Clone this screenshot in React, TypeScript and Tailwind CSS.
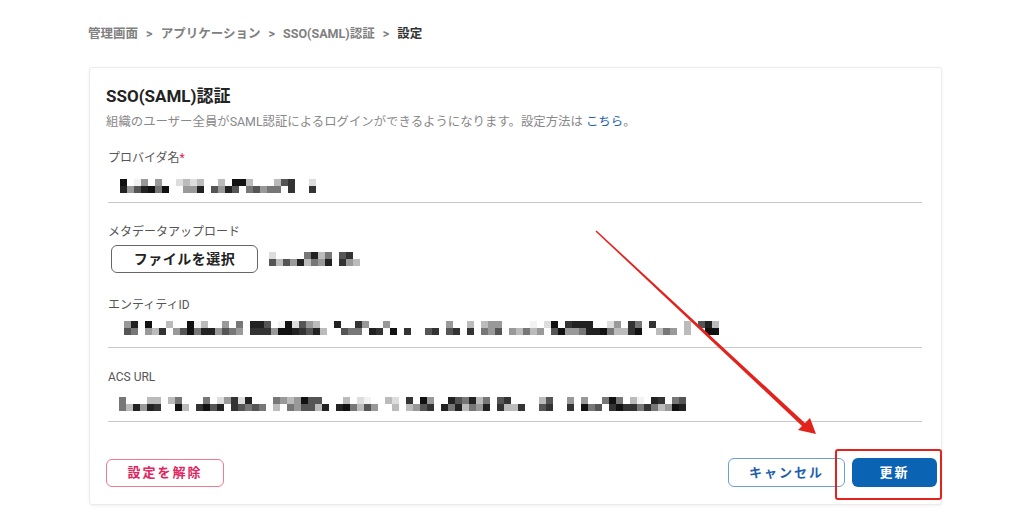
const FONT = "font-['Roboto','Noto_Sans_CJK_JP',sans-serif]";

// deterministic pseudo-random mosaic to stand in for the pixelated (redacted) values
function rng(seed: number) {
  let s = seed;
  return () => {
    s = (s * 9301 + 49297) % 233280;
    return s / 233280;
  };
}

const GRAYS = ["#111", "#222", "#333", "#555", "#777", "#999", "#bbb", "#ddd", "#f2f2f2"];

function Mosaic({ seed, cells, gapEvery = 5 }: { seed: number; cells: number; gapEvery?: number }) {
  const r = rng(seed);
  const cols: { top: string; bottom: string }[] = [];
  for (let i = 0; i < cells; i++) {
    const gap = r() < 1 / gapEvery;
    if (gap) {
      cols.push({ top: "transparent", bottom: "transparent" });
      continue;
    }
    const t = r();
    const b = r();
    cols.push({
      top: t < 0.4 ? "transparent" : GRAYS[Math.floor(r() * GRAYS.length)],
      bottom: b < 0.15 ? "transparent" : GRAYS[Math.floor(r() * (GRAYS.length - 2))],
    });
  }
  return (
    <div className="flex">
      {cols.map((c, i) => (
        <div key={i} className="flex flex-col">
          <div className="h-[7px] w-[7px]" style={{ background: c.top }} />
          <div className="h-[7px] w-[7px]" style={{ background: c.bottom }} />
        </div>
      ))}
    </div>
  );
}

function Field({ label, required, children }: { label: string; required?: boolean; children: React.ReactNode }) {
  return (
    <div className="flex flex-col">
      <div className="text-[12px] leading-[16px] text-[#555]">
        {label}
        {required && <span className="text-[#e0245e]">*</span>}
      </div>
      {children}
    </div>
  );
}

export default function App() {
  return (
    <div className={`relative h-[529px] w-[1024px] overflow-hidden bg-white ${FONT}`}>
      {/* breadcrumb */}
      <nav className="ml-[88px] pt-[26px] text-[12.5px] font-bold leading-[16px] text-[#808080]">
        管理画面 <span className="mx-[5px]">&gt;</span> アプリケーション <span className="mx-[5px]">&gt;</span>{" "}
        SSO(SAML)認証 <span className="mx-[5px]">&gt;</span> <span className="text-[#333]">設定</span>
      </nav>

      {/* card */}
      <section className="ml-[89px] mt-[25px] w-[853px] rounded-[3px] border border-[#ebebeb] pb-[17px] pl-[16px] pr-[19px] pt-[18px] shadow-[0_1px_3px_rgba(0,0,0,0.06)]">
        <h1 className="text-[17px] font-bold leading-[20px] text-[#222]">SSO(SAML)認証</h1>
        <p className="mt-[8px] text-[12.4px] leading-[16px] text-[#888]">
          組織のユーザー全員がSAML認証によるログインができるようになります。設定方法は{" "}
          <span className="text-[#1f5fae]">こちら</span>。
        </p>

        <div className="ml-[2px] mt-[20px] flex flex-col">
          <Field label="プロバイダ名" required>
            <div className="ml-[12px] mt-[13px] h-[14px]">
              <Mosaic seed={11} cells={28} gapEvery={4} />
            </div>
            <div className="mt-[9px] h-px bg-[#c8c8c8]" />
          </Field>

          <div className="mt-[21px]">
            <Field label="メタデータアップロード">
              <div className="mt-[5px] flex items-center gap-[11px]">
                <button className="ml-[3px] h-[28px] w-[147px] rounded-[6px] border border-[#666] text-[14px] font-bold tracking-[0.5px] text-[#222]">
                  ファイルを選択
                </button>
                <Mosaic seed={5} cells={17} gapEvery={3} />
              </div>
            </Field>
          </div>

          <div className="mt-[24px]">
            <Field label="エンティティID">
              <div className="ml-[9px] mt-[8px] h-[14px]">
                <Mosaic seed={23} cells={86} gapEvery={7} />
              </div>
              <div className="mt-[12px] h-px bg-[#c8c8c8]" />
            </Field>
          </div>

          <div className="mt-[21px]">
            <Field label="ACS URL">
              <div className="ml-[11px] mt-[12px] h-[14px]">
                <Mosaic seed={41} cells={81} gapEvery={6} />
              </div>
              <div className="mt-[10px] h-px bg-[#c8c8c8]" />
            </Field>
          </div>
        </div>

        <div className="mt-[36px] flex items-center">
          <button className="h-[28px] w-[118px] rounded-[6px] border border-[#f07a8e] text-[13px] font-bold tracking-[2px] text-[#e0245e]">
            設定を解除
          </button>
          <div className="-mr-[15px] ml-auto flex gap-[7px]">
            <button className="h-[29px] w-[117px] rounded-[6px] border border-[#6b9fd6] text-[13px] font-bold tracking-[2px] text-[#1f5fae]">
              キャンセル
            </button>
            <button className="h-[29px] w-[85px] rounded-[6px] bg-[#0b63b3] text-[13px] font-bold tracking-[2px] text-white">
              更新
            </button>
          </div>
        </div>
      </section>

      {/* annotation: highlight box */}
      <div className="absolute left-[835px] top-[449px] h-[51px] w-[107px] rounded-[3px] border-2 border-[#e2231d]" />

      {/* annotation: arrow */}
      <svg className="pointer-events-none absolute left-0 top-0" width="1024" height="529" viewBox="0 0 1024 529">
        <polygon points="595.5,231.5 596.5,230.5 806,424 803,427" fill="#e2231d" />
        <polygon points="816,434 798,430 810,418" fill="#e2231d" />
      </svg>
    </div>
  );
}
